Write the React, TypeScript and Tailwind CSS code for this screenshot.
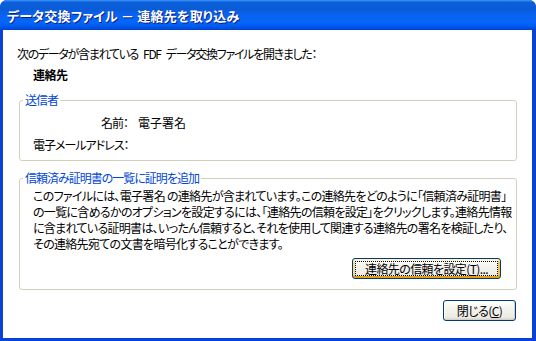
const jp = "font-['Noto_Sans_CJK_JP','Noto_Sans',sans-serif] [font-feature-settings:'palt']";

function XpButton({ children, focused, className }: { children: React.ReactNode; focused?: boolean; className?: string }) {
  return (
    <button
      className={`${className ?? ''} h-[21px] rounded-[3px] border border-[#003C74] bg-[linear-gradient(180deg,#ffffff_0%,#f4f3ee_40%,#ecebe6_85%,#d6d0c5_100%)] p-[2px] text-[12px] leading-none tracking-[-0.6px] text-black ${
        focused
          ? 'shadow-[inset_0_2px_0_#fff0cf,inset_0_-2px_0_#e5a01a,inset_2px_0_0_#fbd88a,inset_-2px_0_0_#f5bf53]'
          : 'shadow-[inset_-1px_-1px_0_#d6d0c5,inset_1px_1px_0_#ffffff]'
      }`}
    >
      <span
        className={`flex h-full w-full items-center justify-center ${
          focused ? 'border border-dotted border-black' : 'border border-transparent'
        }`}
      >
        {children}
      </span>
    </button>
  );
}

function GroupBox({ title, children, className }: { title: string; children: React.ReactNode; className?: string }) {
  return (
    <fieldset className={`${className ?? ''} min-w-0 rounded-[3px] border border-[#d0d0bf] px-0`}>
      <legend className="ml-[3px] px-[2px] text-[12px] leading-[16px] text-[#0046d5]">{title}</legend>
      {children}
    </fieldset>
  );
}

export default function App() {
  return (
    <div className={`${jp} h-[341px] w-[536px] overflow-hidden bg-white`}>
      <div className="flex h-full w-full flex-col overflow-hidden rounded-t-[7px] bg-[#0843d9]">
        {/* Title bar */}
        <div className="flex h-[30px] shrink-0 items-center bg-[linear-gradient(180deg,#3d95ff_0%,#0a5fd8_8%,#0a5cd6_30%,#0a62f0_50%,#0566fa_75%,#0058ee_88%,#0045d0_100%)] pl-[7px]">
          <span className="text-[13px] font-bold leading-none tracking-[0.2px] text-white [text-shadow:1px_1px_0_#0a1e80]">
            データ交換ファイル － 連絡先を取り込み
          </span>
        </div>

        {/* Body */}
        <div className="mx-[3px] mb-[3px] mr-[4px] flex flex-1 flex-col bg-white pl-[14px] pr-[15px] pt-[16px] text-[12px] leading-[16px] tracking-[-1px] text-black">
          <p className="whitespace-nowrap tracking-[-1.3px]">
            次のデータが含まれている<span className="inline-block w-[5px]" />FDF<span className="inline-block w-[5px]" />データ交換ファイルを開きました：
          </p>
          <p className="mt-[5px] pl-[16px] font-bold tracking-[-0.5px]">連絡先</p>

          <GroupBox title="送信者" className="ml-[2px] mt-[9px]">
            <div className="grid grid-cols-[95px_1fr] gap-x-[10px] gap-y-[6px] pb-[7px] pl-[13px] pt-[7px]">
              <span className="text-right">名前：</span>
              <span className="tracking-[0px]">電子署名</span>
              <span className="text-right whitespace-nowrap">電子メールアドレス：</span>
              <span />
            </div>
          </GroupBox>

          <GroupBox title="信頼済み証明書の一覧に証明を追加" className="ml-[2px] mt-[9px]">
            <div className="flex flex-col pb-[10px] pl-[13px] pr-[15px] pt-[2px]">
              <p className="whitespace-nowrap tracking-[-0.7px]">
                このファイルには、電子署名 の連絡先が含まれています。この連絡先をどのように「信頼済み証明書」
                <br />
                の一覧に含めるかのオプションを設定するには、「連絡先の信頼を設定」をクリックします。連絡先情報
                <br />
                に含まれている証明書は、いったん信頼すると、それを使用して関連する連絡先の署名を検証したり、
                <br />
                その連絡先宛ての文書を暗号化することができます。
              </p>
              <div className="mt-[6px] flex justify-end">
                <XpButton focused className="w-[149px]">
                  連絡先の信頼を設定(<span className="underline">T</span>)...
                </XpButton>
              </div>
            </div>
          </GroupBox>

          <div className="mt-[10px] flex justify-end pr-[1px]">
            <XpButton className="w-[73px]">
              閉じる(<span className="underline">C</span>)
            </XpButton>
          </div>
        </div>
      </div>
    </div>
  );
}
